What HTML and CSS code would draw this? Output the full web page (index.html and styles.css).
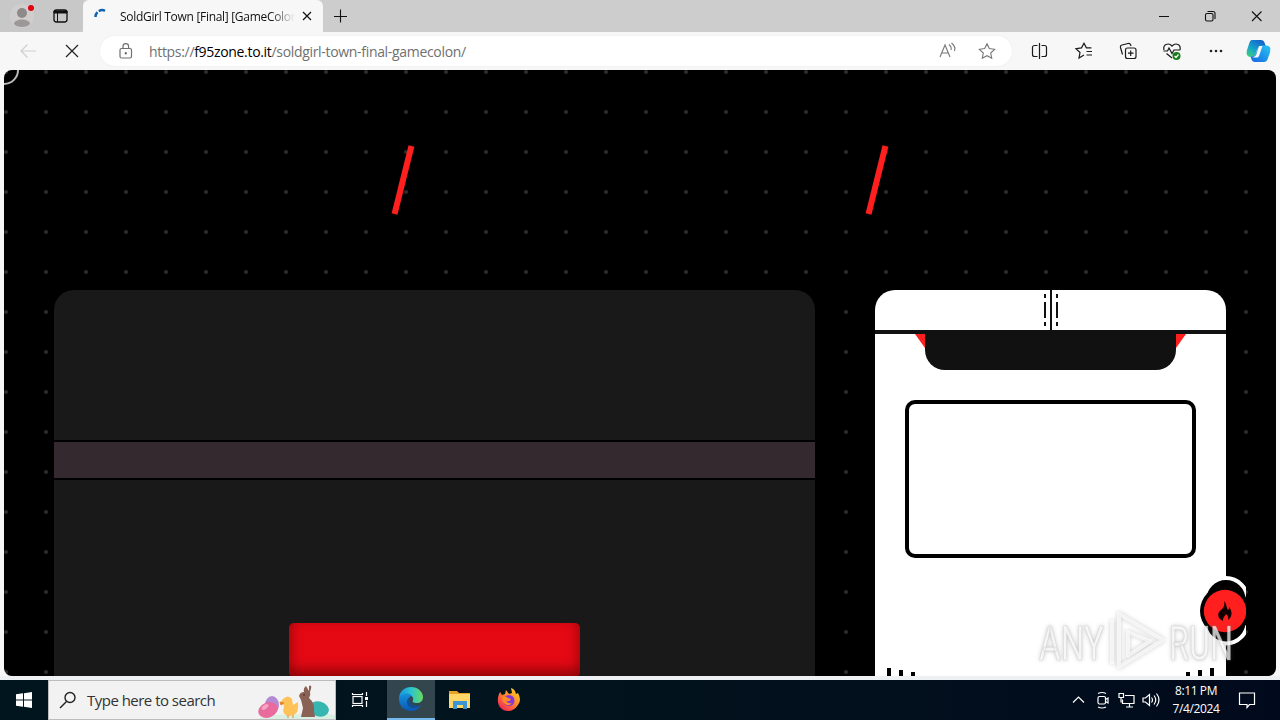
FILE: index.html
```
<!DOCTYPE html>
<html lang="en">
<head>
  <meta charset="UTF-8">
  <title>SoldGirl Town [Final] [GameColon]</title>
  <meta name="viewport" content="width=device-width, initial-scale=1.0">
  <link rel="stylesheet" href="styles.css">
</head>
<body>
  <div class="desktop">
    <div class="tabbar">
      <div class="tab-left">
        <svg width="82" height="32" viewBox="0 0 82 32">
          <circle cx="22" cy="16" r="12" fill="#d0cecd"/>
          <circle cx="22" cy="13" r="5" fill="#8d8a89"/>
          <path d="M14 24c0-6 16-6 16 0-3 4-13 4-16 0z" fill="#9b9897"/>
          <circle cx="31" cy="8" r="3" fill="#e3000f"/>
          <rect x="54" y="10" width="13" height="12" rx="2.5" fill="none" stroke="#111" stroke-width="1.3"/>
          <path d="M54 11h13v2h-13zM57.500 13v9" fill="#111" stroke="#111"/>
        </svg>
      </div>
      <div class="tab">
        <svg class="spinner" width="14" height="14" viewBox="0 0 14 14"><path d="M1.500 9A6 6 0 0 1 3.500 4.300M4.800 3.300A6 6 0 0 1 11 2.800" fill="none" stroke="#1263ac" stroke-width="2.500"/></svg>
        <span class="tab-title">SoldGirl Town [Final] [GameColon</span>
        <svg width="10" height="10" viewBox="0 0 10 10"><path d="M1 1l8 8M9 1l-8 8" stroke="#111" stroke-width="1.200"/></svg>
      </div>
      <svg class="new-tab" width="14" height="14" viewBox="0 0 14 14"><path d="M7.500 .5v13M1 7.500h13" stroke="#111" stroke-width="1.100"/></svg>
      <svg class="controls" width="110" height="14" viewBox="0 0 110 14" fill="none" stroke="#111" stroke-width="1.100">
        <path d="M0 7.500h10M93 2.500l9.500 9.500M102.500 2.500l-9.500 9.500"/>
        <rect x="46.500" y="4.500" width="7.500" height="7.500" rx="1.500"/>
        <path d="M48.500 2.500h5.500a2 2 0 0 1 2 2v5.500"/>
      </svg>
    </div>

    <div class="toolbar">
      <svg class="nav" width="60" height="16" viewBox="0 0 60 16" fill="none">
        <path d="M16 8H1M7.500 1.500L1 8l6.500 6.500" stroke="#cfcfcf" stroke-width="1.200"/>
        <path d="M46 2l12 12M58 2L46 14" stroke="#222" stroke-width="1.200"/>
      </svg>
      <div class="address">
        <svg width="14" height="16" viewBox="0 0 14 16" fill="none" stroke="#707070" stroke-width="1.200"><rect x="1" y="5.500" width="11.500" height="9.500" rx="1.500"/><path d="M4 5.500V3.500a2.800 2.800 0 0 1 5.600 0v2"/><circle cx="6.800" cy="10.300" r=".6" fill="#707070"/></svg>
        <span class="url">https://<b>f95zone.to.it</b>/soldgirl-town-final-gamecolon/</span>
        <svg class="address-icons" width="58" height="18" viewBox="0 0 58 18" fill="none" stroke="#777" stroke-width="1.100">
          <path d="M1 15L6 3l5 12M2.800 11h6.500M10 2.500q3 2.500 2 5.500M12.500 1q4.500 3.500 3 8"/>
          <path d="M48 1.800l2.300 4.800 5.300.7-3.900 3.700 1 5.200-4.700-2.500-4.700 2.500 1-5.200-3.900-3.700 5.300-.7z"/>
        </svg>
      </div>
      <svg class="tools" width="246" height="28" viewBox="0 0 246 28" fill="none" stroke="#1b1b1b" stroke-width="1.200">
        <path d="M7.500 8.500h-3a2 2 0 0 0-2 2v7a2 2 0 0 0 2 2h3M11.500 8.500h3a2 2 0 0 1 2 2v7a2 2 0 0 1-2 2h-3M9.500 6v16"/>
        <path d="M54 18l-5 3 1-5.500-4-3.800 5.500-.8L54 6.300l2.400 4.600h5M56.500 14.500h5.500M56.500 18h5.500"/>
        <rect x="95.500" y="11" width="10.500" height="10.500" rx="2"/><path d="M100.700 13.500v5.500M98 16.200h5.500M92.500 17.500l-2-7q-.5-2 1.500-2.500l6-1.500q2-.5 2.700 1.500l.3 1"/>
        <path d="M134 13q-1-4 2-5.500 3.500-1.500 6 1.500 3-3 6-1.500 3 1.700 2 5.500M133.500 14h4l1.500-3 3 5.500 2-3.500h6M136.500 16.500l5.500 4.500"/>
        <circle cx="146.500" cy="19" r="4" fill="#187c1b" stroke="none"/><path d="M144.500 19l1.500 1.500 2.500-3" stroke="#fff"/>
        <g fill="#222" stroke="none"><circle cx="181" cy="14" r="1.300"/><circle cx="186" cy="14" r="1.300"/><circle cx="191" cy="14" r="1.300"/></g>
        <g stroke="none">
          <path d="M222 3h9q3 0 4 4l1 3h-5q-3 0-4 3l-2 5q-1 2-4 2-6 0-4-7l2-6q1-4 3-4z" fill="url(#copilotA)"/>
          <path d="M234 25h-9q-3 0-4-4l-.5-1.500q4 .5 5.500-3.500l2-5q1-2.500 4-2.500h4q6 0 4 7l-2 5.500q-1 4-4 4z" fill="url(#copilotB)"/>
          <path d="M229 9h3.500l-3.500 10q-.8 2-3.500 1.500h-3q3-.5 4-3.500z" fill="#f7f7f7"/>
        </g>
        <defs>
          <linearGradient id="copilotA" x1="0" y1="1" x2=".7" y2="0"><stop offset="0" stop-color="#48d36e"/><stop offset=".45" stop-color="#18a8c8"/><stop offset="1" stop-color="#1463cc"/></linearGradient>
          <linearGradient id="copilotB" x1="1" y1="0" x2="0" y2="1"><stop offset="0" stop-color="#29c8f2"/><stop offset="1" stop-color="#1564e4"/></linearGradient>
        </defs>
      </svg>
    </div>

    <div class="page">
      <div class="corner-ring"></div>
      <div class="hero"><span class="slash"></span><span class="slash"></span></div>
      <div class="columns">
        <div class="post">
          <div class="post-bar"></div>
          <div class="download"></div>
        </div>
        <div class="sidebar">
          <div class="sidebar-top">
            <svg width="16" height="40" viewBox="0 0 16 40" fill="#111"><path d="M7 0h2v40H7zM1 4h2v4H1zM1 12h2v16H1zM1 32h2v4H1zM13 4h2v4h-2zM13 12h2v16h-2zM13 32h2v4h-2z"/></svg>
          </div>
          <div class="notch"></div>
          <div class="frame"></div>
          <div class="bars"><div><i></i><i></i><i></i></div><div><i></i><i></i><i></i></div></div>
        </div>
      </div>
      <svg class="fire" width="48" height="72" viewBox="0 0 48 72">
        <circle cx="28" cy="25.500" r="21.500" fill="#000" stroke="#fff" stroke-width="4"/>
        <circle cx="28" cy="48" r="21.500" fill="#000" stroke="#fff" stroke-width="4"/>
        <circle cx="27" cy="37" r="25"/>
        <circle cx="27" cy="37" r="21.200" fill="#ff1f1f"/>
        <path d="M26 27c3 3 2 6 4 9 1-1 1-2 1-3 4 5 3 10-1 13 1-4-1-5-2-6-1 2-3 3-3 7-6-3-6-8-2-11 3-3 4-5 3-9z" fill="#120000"/>
      </svg>
      <svg class="watermark" width="202" height="70" viewBox="0 0 202 70">
        <g fill="#fff" fill-opacity=".72" stroke="#aaa" stroke-opacity=".25" stroke-width="1.200">
          <text x="2" y="53" textLength="65" lengthAdjust="spacingAndGlyphs">ANY</text>
          <text x="132" y="53" textLength="64" lengthAdjust="spacingAndGlyphs">RUN</text>
        </g>
        <g class="mark" fill="none" stroke="#fff" stroke-opacity=".8" stroke-width="4" stroke-linejoin="round">
          <path d="M82 56V7l44 26-44 27v-4M75 13v44M91 25v24l22-15z"/>
        </g>
      </svg>
    </div>

    <div class="edge"></div>

    <div class="taskbar">
      <div class="start"><svg width="16" height="16" viewBox="0 0 16 16" fill="#fff"><path d="M0 2.300L7 1.300v6.200H0zM8 1.200L16 0v7.500H8zM0 8.500h7v6.200l-7-1zM8 8.500h8V16l-8-1.200z"/></svg></div>
      <div class="search">
        <svg width="18" height="18" viewBox="0 0 18 18" fill="none" stroke="#222" stroke-width="1.400"><circle cx="11" cy="6.500" r="5"/><path d="M7.500 10.500L1 17"/></svg>
        <span>Type here to search</span>
        <svg class="easter" width="78" height="38" viewBox="0 0 78 38">
          <path d="M0 38q15-6 35-4 24-5 43 0v4z" fill="#d9efe4"/>
          <ellipse cx="15" cy="24" rx="7" ry="9" fill="#b38bd4"/>
          <ellipse cx="11" cy="29" rx="10" ry="7.500" transform="rotate(-22 11 29)" fill="#e96b9d"/>
          <ellipse cx="8" cy="26" rx="4" ry="2" transform="rotate(-35 8 26)" fill="#f6a4c3"/>
          <path d="M26 18q5-5 9 0l1 6 5-3q1 11-4 13-10 3-11-5 2-4 0-6l-3-1z" fill="#ffc259"/>
          <path d="M23 21l4 1-3 2zM31 34v3M36 34v3" fill="#e7792a" stroke="#e7892a"/>
          <ellipse cx="62" cy="28" rx="10" ry="7.500" transform="rotate(15 62 28)" fill="#35b6b1"/>
          <path d="M42 15q1-4 5-4-1-4 2-6l3 5 0-5q4-2 1 6 1 3-1 6 6 5 5 13l1 6H44l2-9-2-8z" fill="#8a6255"/>
          <circle cx="47" cy="14" r=".8" fill="#3a241e"/>
        </svg>
      </div>
      <div class="app"><svg width="18" height="18" viewBox="0 0 18 18" fill="none" stroke="#fff" stroke-width="1.200"><rect x="2" y="5.500" width="9" height="7"/><path d="M1.500 2v1.500h10V2M1.500 16v-1.500h10V16M15.500 1v4M15.500 10v6"/><path d="M14 6h3v3h-3z" fill="#fff" stroke="none"/></svg></div>
      <div class="app active">
        <svg width="24" height="24" viewBox="0 0 24 24">
          <defs>
            <linearGradient id="edgeTop"><stop offset="0" stop-color="#1695d8"/><stop offset=".5" stop-color="#2bc3d1"/><stop offset="1" stop-color="#69dc5c"/></linearGradient>
            <linearGradient id="edgeLow" x2="0" y2="1"><stop offset="0" stop-color="#1694df"/><stop offset="1" stop-color="#0b57b3"/></linearGradient>
          </defs>
          <path d="M0 12C0 4 6 0 12 0c7 0 12 5 12 10 0 4-3 6-6 6-4 0-5-1-4-3 1-3-2-5-5-5-5 0-8 3-9 4z" fill="url(#edgeTop)"/>
          <path d="M0 12c1-6 10-8 13-3-5 0-6 10 2 12q4 0 7-3c-2 4-6 6-10 6C5 24 0 19 0 12z" fill="url(#edgeLow)"/>
          <path d="M8 13c-1 6 4 9 9 8q3-.5 5-3c-6 2-12 0-11-7q-2 0-3 2z" fill="#124f93"/>
        </svg>
      </div>
      <div class="app"><svg width="22" height="20" viewBox="0 0 22 20"><path d="M0 1h8l2 2h11v5H0z" fill="#e8a325"/><path d="M0 4h21v14H0z" fill="#ffd766"/><path d="M4 11h14v8h-4v-4H8v4H4z" fill="#3d94d4"/></svg></div>
      <div class="app"><svg width="24" height="24" viewBox="0 0 24 24">
        <defs><linearGradient id="fox" x1="1" y1="0" x2=".2" y2="1"><stop offset="0" stop-color="#ffe226"/><stop offset=".45" stop-color="#ff9227"/><stop offset="1" stop-color="#f42359"/></linearGradient></defs>
        <path d="M3 4l2 3 3-1 1-4 3 4 3-1-1-5q4 1 5 6l2-1q4 7 0 12-4 6-10 6C2 23-2 13 3 4z" fill="url(#fox)"/>
        <circle cx="12" cy="12.500" r="5.500" fill="#8438d9"/><path d="M5 9q3-2 6 1l3 1q-1 3-5 2 2 3 6 2-3 4-7 1-3-2-3-7z" fill="#ff8a28"/>
      </svg></div>
      <div class="tray">
        <svg width="90" height="20" viewBox="0 0 90 20" fill="none" stroke="#fff" stroke-width="1.200">
          <path d="M1 12.500l5.500-5.500 5.500 5.500"/>
          <rect x="26" y="6.500" width="7.500" height="7.500" rx="1.500"/><path d="M33.500 9.500l2.500-1.500v5l-2.500-1.500M26 3.500q4-2 8 0M26 17q4 2 8 0"/>
          <path d="M53 5.500h9v8H50.500v-4M54 17h7M57.500 13.500V17M47 3.500h4.500v4H47zM49 7.500v5"/>
          <path d="M71 8h2.500l4-3.500v11l-4-3.500H71zM79.500 7.500q2 2.500 0 5M82 5.500q3.500 4.500 0 9M84.500 3.500q5 6.500 0 13"/>
        </svg>
        <div class="clock">8:11 PM<br>7/4/2024</div>
        <svg width="18" height="18" viewBox="0 0 18 18" fill="none" stroke="#fff" stroke-width="1.200"><path d="M1.500 2h15v11.500h-5l-2.500 3v-3H1.500z"/></svg>
      </div>
    </div>
  </div>
</body>
</html>
```
FILE: styles.css
```
* {
  box-sizing: border-box;
}

body {
  margin: 0;
  font-family: 'Open Sans', 'Noto Sans', sans-serif;
  background: #f7f7f7;
  overflow: hidden;
}

svg {
  display: block;
  flex-shrink: 0;
}

.desktop {
  width: 1280px;
  height: 720px;
  display: flex;
  flex-direction: column;
}

/* browser window */
.tabbar {
  height: 32px;
  display: flex;
  align-items: center;
  background: #cdcdcd;
}

.tab-left {
  width: 83px;
  height: 32px;
  background: #c9c8c8;
  border-radius: 0 0 5px 0;
}

.tab {
  width: 240px;
  height: 32px;
  padding: 0 11px 0 11px;
  display: flex;
  align-items: center;
  background: #f7f7f7;
  border-radius: 6px 6px 0 0;
}

.spinner {
  margin-top: -2px;
}

.tab-title {
  width: 175px;
  margin: 0 7px 0 12px;
  overflow: hidden;
  white-space: nowrap;
  font-size: 12px;
  letter-spacing: -0.3px;
  color: #111;
  -webkit-mask-image: linear-gradient(to right, #000 86%, transparent);
  mask-image: linear-gradient(to right, #000 86%, transparent);
}

.new-tab {
  margin-left: 10px;
}

.controls {
  margin-left: auto;
  margin-right: 11px;
}

.toolbar {
  height: 38px;
  padding-left: 20px;
  display: flex;
  align-items: center;
  background: #f7f7f7;
}

.address {
  width: 912px;
  height: 30px;
  margin-left: 20px;
  padding: 0 15px 0 19px;
  display: flex;
  align-items: center;
  background: #fff;
  border-radius: 15px;
  box-shadow: 0 0 2px #e8e8e8;
}

.url {
  margin-left: 16px;
  font-size: 14px;
  letter-spacing: -0.32px;
  color: #707070;
  white-space: nowrap;
}

.url b {
  font-weight: normal;
  color: #000;
}

.address-icons {
  margin-left: auto;
}

.tools {
  margin-left: 18px;
}

/* website */
.page {
  position: relative;
  height: 606px;
  margin: 0 4px;
  padding: 0 50px;
  overflow: hidden;
  border-radius: 8px;
  background-color: #000;
  background-image: radial-gradient(circle at 2px 2px, #292929 1.6px, transparent 2.4px);
  background-size: 40px 40px;
}

.corner-ring {
  position: absolute;
  left: -15px;
  top: -15px;
  width: 30px;
  height: 30px;
  border: 2px solid #b9b9b9;
  border-radius: 50%;
}

.hero {
  height: 220px;
  padding-left: 346px;
  display: flex;
  align-items: center;
  gap: 468px;
}

.slash {
  width: 6px;
  height: 70px;
  background: #ff1f1f;
  transform: rotate(14deg);
}

.columns {
  height: 386px;
  display: flex;
  gap: 60px;
}

.post {
  width: 761px;
  padding-top: 150px;
  background: #191919;
  border-radius: 20px 20px 0 0;
}

.post-bar {
  height: 40px;
  background: #33292e;
  border-top: 2px solid #000;
  border-bottom: 2px solid #000;
}

.download {
  width: 291px;
  height: 54px;
  margin: 143px auto 0;
  background: #e50914;
  border-radius: 5px;
  box-shadow: inset 0 -6px 14px rgba(80, 0, 0, 0.65);
}

.sidebar {
  width: 351px;
  background: #fff;
  border-radius: 20px 20px 0 0;
}

.sidebar-top {
  height: 44px;
  display: flex;
  justify-content: center;
  border-bottom: 4px solid #111;
}

.notch {
  position: relative;
  width: 251px;
  height: 36px;
  margin: 0 auto;
  background: #111;
  border-radius: 0 0 20px 20px;
}

.notch::before,
.notch::after {
  content: "";
  position: absolute;
  top: 0;
  width: 10px;
  height: 14px;
  background: #ff1f1f;
}

.notch::before {
  left: -10px;
  clip-path: polygon(0 0, 100% 0, 100% 100%);
}

.notch::after {
  right: -10px;
  clip-path: polygon(0 0, 100% 0, 0 100%);
}

.frame {
  height: 158px;
  margin: 30px 30px 0;
  border: 4px solid #000;
  border-radius: 10px;
}

.bars {
  height: 118px;
  padding: 0 12px;
  display: flex;
  justify-content: space-between;
  align-items: flex-end;
}

.bars div {
  display: flex;
  align-items: flex-end;
  gap: 8px;
}

.bars div:last-child {
  flex-direction: row-reverse;
}

.bars i {
  width: 4px;
  height: 8px;
  background: #000;
}

.bars i:nth-child(2) {
  height: 6px;
}

.bars i:nth-child(3) {
  height: 4px;
}

.fire {
  position: absolute;
  left: 1194px;
  top: 504px;
}

.watermark {
  position: absolute;
  left: 1033px;
  top: 537px;
  font-family: Roboto, sans-serif;
  font-size: 48px;
  filter: drop-shadow(0 0 2px rgba(90, 90, 90, 0.45));
}

.mark {
  opacity: 0.85;
}

.edge {
  height: 4px;
  background: #eff0f4;
}

/* windows taskbar */
.taskbar {
  height: 40px;
  display: flex;
  background: linear-gradient(to right, #00151e, #02131d 45%, #010a1c);
}

.start,
.app {
  width: 48px;
  display: flex;
  align-items: center;
  justify-content: center;
}

.search {
  width: 288px;
  padding-left: 10px;
  display: flex;
  align-items: center;
  background: #f2f2f2;
  border: 1px solid #bcbcbc;
  font-size: 15px;
  color: #333;
  letter-spacing: -0.52px;
}

.search span {
  margin-left: 10px;
}

.easter {
  margin-left: auto;
}

.app:nth-child(3) {
  width: 51px;
  padding-right: 4px;
}

.active {
  background: #33464e;
  border-bottom: 2px solid #76b9ed;
}

.app:nth-child(n+5) {
  width: 49px;
}

.tray {
  margin-left: auto;
  margin-right: 24px;
  display: flex;
  align-items: center;
}

.clock {
  width: 68px;
  color: #fff;
  font-size: 12px;
  line-height: 18px;
  letter-spacing: -0.4px;
  text-align: center;
}

.tray svg:last-child {
  margin-left: 8px;
}
```
